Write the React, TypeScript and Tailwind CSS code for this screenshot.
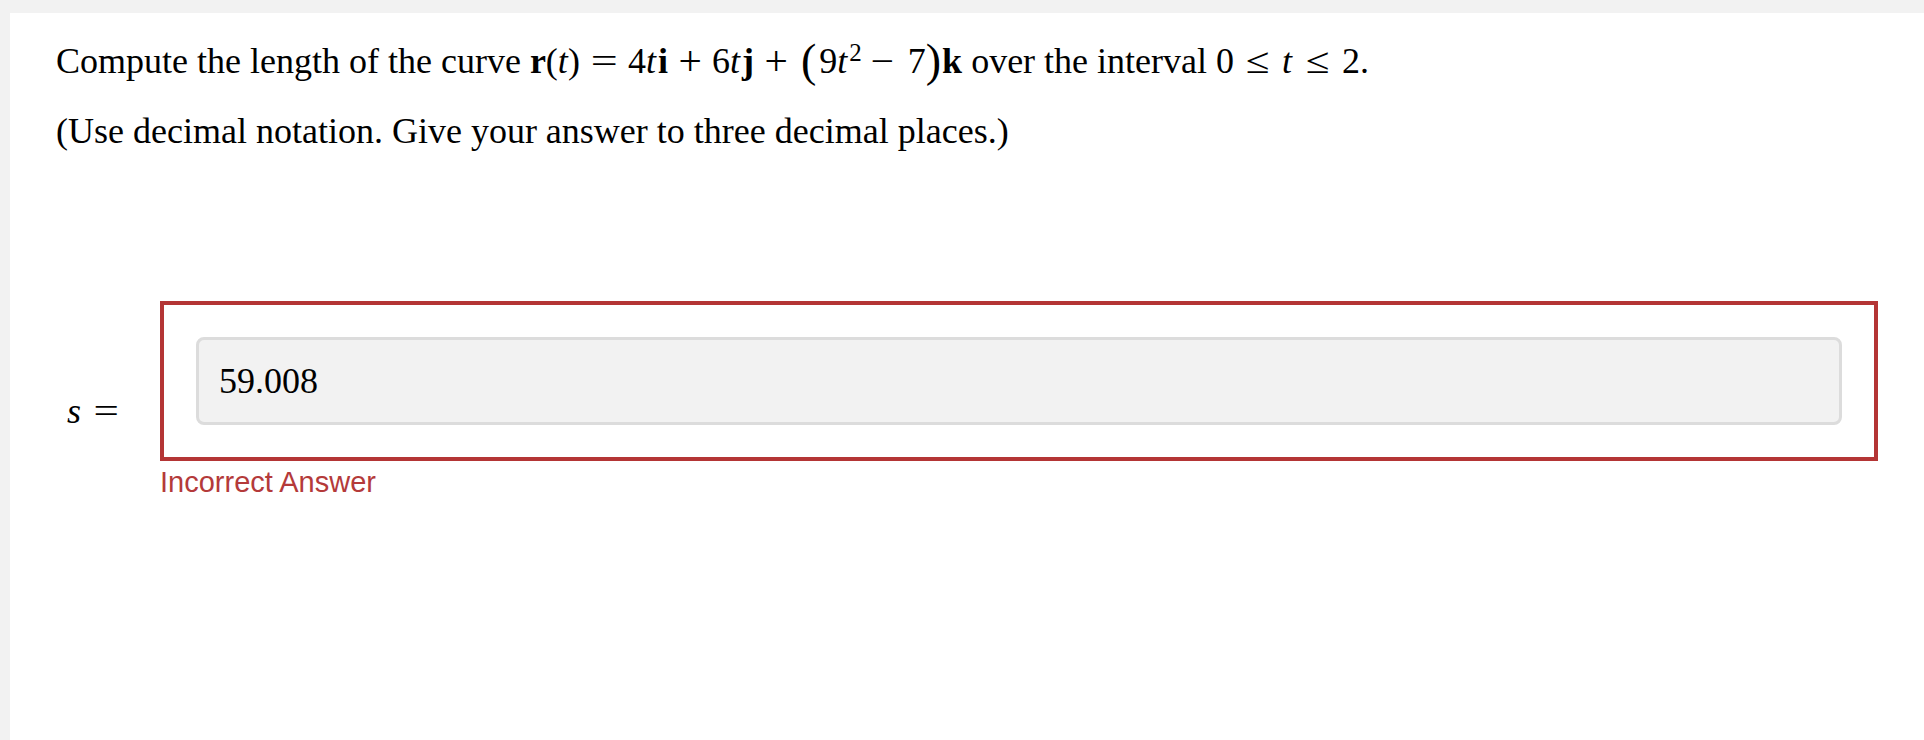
import React from 'react';

const serif = "font-['Liberation_Serif','Times_New_Roman',serif]";

// math operator: fixed-width box, spacing on both sides, glyph stretched a little
function Op({
  children,
  space = 'mx-[8px]',
  scale = 'scale-x-[1.1]',
}: {
  children: React.ReactNode;
  space?: string;
  scale?: string;
}) {
  return (
    <span className={`inline-block w-[28px] text-center ${space}`}>
      <span className={`inline-block ${scale}`}>{children}</span>
    </span>
  );
}

function BigParen({ children, className = '' }: { children: React.ReactNode; className?: string }) {
  return <span className={`relative top-[3px] text-[46px] leading-[0] ${className}`}>{children}</span>;
}

const MI = ({ children }: { children: React.ReactNode }) => <i className="mr-[2px]">{children}</i>;
const B = ({ children }: { children: React.ReactNode }) => <span className="font-bold">{children}</span>;

export default function App() {
  return (
    <div className="min-h-[740px] bg-[#f2f2f2] pt-[13px] pl-[10px]">
      <div className={`min-h-[727px] bg-white pl-[46px] pr-[46px] pt-[27px] text-black ${serif}`}>
        {/* question */}
        <p className="text-[36px] leading-[43px]">
          Compute the length of the curve <B>r</B>(<i>t</i>)
          <Op space="mx-[10px]" scale="scale-x-[1.33]">=</Op>
          4<MI>t</MI>
          <B>i</B>
          <Op scale="scale-[1.15]">+</Op>
          6<MI>t</MI>
          <B>j</B>
          <Op scale="scale-[1.15]">+</Op>
          <BigParen className="ml-[3px] mr-[3px]">(</BigParen>
          9<MI>t</MI>
          <sup className="text-[25px]">2</sup>
          <Op space="ml-[6px] mr-[12px]" scale="scale-x-[1.15]">−</Op>
          7<BigParen className="mr-[1px]">)</BigParen>
          <B>k</B> over the interval 0
          <Op space="mx-[10px]" scale="scale-x-[1.2]">≤</Op>
          <MI>t</MI>
          <Op space="mx-[10px]" scale="scale-x-[1.2]">≤</Op>
          2.
        </p>
        <p className="mt-[27px] text-[36px] leading-[43px]">
          (Use decimal notation. Give your answer to three decimal places.)
        </p>

        {/* answer row */}
        <div className="mt-[148px] flex items-center">
          <div className="mt-4 w-[104px] shrink-0 pl-[11px] text-[36px] leading-normal">
            <i>s</i>
            <span className="ml-[15px] inline-block scale-x-[1.25]">=</span>
          </div>
          <div className="flex-1">
            <div className="border-4 border-[#b43535] p-[32px]">
              <div className="flex h-[88px] items-center rounded-[8px] border-[3px] border-[#dcdcdc] bg-[#f2f2f2] pl-[20px] text-[36px]">
                59.008
              </div>
            </div>
            <div className="font-['Liberation_Sans',Arial,sans-serif] text-[29px] text-[#b43a3a]">
              Incorrect Answer
            </div>
          </div>
        </div>
      </div>
    </div>
  );
}
